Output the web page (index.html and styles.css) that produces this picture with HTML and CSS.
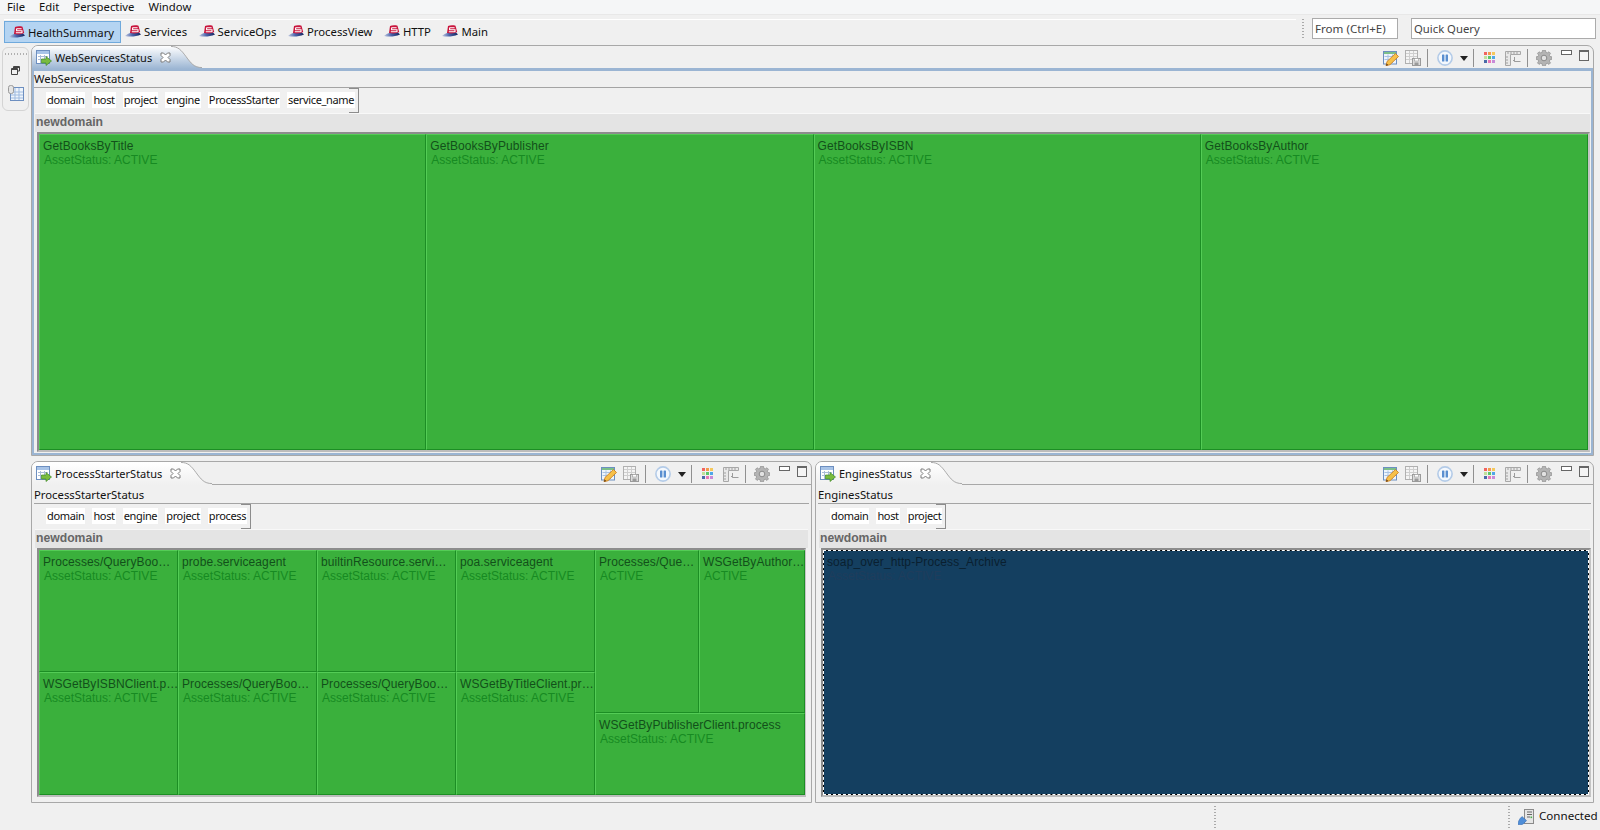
FILE: index.html
```html
<!DOCTYPE html>
<html lang="en">
<head>
<meta charset="utf-8">
<title>HealthSummary</title>
<link rel="stylesheet" href="styles.css">
</head>
<body>
<svg class="defs" width="0" height="0" aria-hidden="true">
  <defs>
    <linearGradient id="gActive" x1="0" y1="0" x2="0" y2="1"><stop offset="0" stop-color="#ffffff"/><stop offset="1" stop-color="#9bb5d3"/></linearGradient>
    <linearGradient id="gIdle" x1="0" y1="0" x2="0" y2="1"><stop offset="0" stop-color="#ffffff"/><stop offset="1" stop-color="#f0f0f0"/></linearGradient>
    <linearGradient id="gSwoosh" x1="0" y1="0" x2="1" y2="0"><stop offset="0" stop-color="#c4cce2"/><stop offset=".45" stop-color="#4a64ac"/><stop offset="1" stop-color="#14245e"/></linearGradient>
    <symbol id="i-hat" viewBox="0 0 16 12">
      <path d="M0 11C3 8 8 6.500 13 6.500L16 9.500C11 11.800 5 12 0 11Z" fill="url(#gSwoosh)"/>
      <path d="M6 1C8 .2 11.500 .2 13.500 .8L15.200 7C13 8.400 9 8.800 5 8Z" fill="#c8143c"/>
      <path d="M7.400 2.700H12.600M7.600 2.700V4.700H13V6.700H6.800" stroke="#fff" stroke-width="1.100" fill="none"/>
    </symbol>
    <symbol id="i-view" viewBox="0 0 16 16">
      <rect x=".5" y=".5" width="13" height="13" fill="#fff" stroke="#6d8fc0"/>
      <rect x="1" y="1" width="12" height="3" fill="#a8c4e8"/>
      <path d="M2 6.500H12M2 9.500H12M4.500 5V13M8.500 5V13" stroke="#a9bcd8"/>
      <path d="M5.500 9H10V6.500L15.500 11 10 15.500V13H5.500Z" fill="#79bb3f" stroke="#3f8a2a" stroke-width=".7"/>
    </symbol>
    <symbol id="i-edit" viewBox="0 0 16 16">
      <rect x=".5" y="1.500" width="13" height="12.500" fill="#eef4fb" stroke="#6d8fc0"/>
      <rect x="1" y="2" width="12" height="2" fill="#7cc08a"/>
      <path d="M1.500 6.500H13M1.500 9.500H13M5 4.500V14M9.500 4.500V14" stroke="#a9c2e2"/>
      <path d="M3 15.800L4 11.500 12.500 3.500 15.500 6.500 7 14.700Z" fill="#f6c04a" stroke="#c9781c" stroke-width=".8"/>
      <path d="M3 15.800L3.600 13.400 5.300 15.100Z" fill="#5a3a1a"/>
    </symbol>
    <symbol id="i-save" viewBox="0 0 16 16">
      <rect x=".5" y=".5" width="12" height="13" fill="#f4f4f4" stroke="#b0b0b0"/>
      <path d="M1 3.500H12M1 6.500H12M1 9.500H12M4.500 1V13M8.500 1V13" stroke="#cfcfcf"/>
      <rect x="7.500" y="8.500" width="8" height="7" fill="#dcdcdc" stroke="#9a9a9a"/>
      <rect x="9.500" y="8.500" width="4" height="2.500" fill="#fff" stroke="#9a9a9a" stroke-width=".6"/>
      <rect x="9.500" y="12.500" width="4" height="3" fill="#9a9a9a"/>
    </symbol>
    <symbol id="i-pause" viewBox="0 0 16 16">
      <circle cx="8" cy="8" r="7.100" fill="#f4f8fd" stroke="#b3cbe8" stroke-width="1.600"/>
      <rect x="5" y="4.500" width="2.400" height="7" rx=".6" fill="#5b8fd0"/>
      <rect x="8.600" y="4.500" width="2.400" height="7" rx=".6" fill="#5b8fd0"/>
    </symbol>
    <symbol id="i-colors" viewBox="0 0 12 12">
      <rect width="3" height="3" x="0" y="0" fill="#f2645e"/><rect width="3" height="3" x="4" y="0" fill="#f59a4c"/><rect width="3" height="3" x="8" y="0" fill="#f5c85c"/>
      <rect width="3" height="3" x="0" y="4" fill="#bfe09a"/><rect width="3" height="3" x="4" y="4" fill="#5cc76a"/><rect width="3" height="3" x="8" y="4" fill="#4fa6e8"/>
      <rect width="3" height="3" x="0" y="8" fill="#4a6aa8"/><rect width="3" height="3" x="4" y="8" fill="#e878b8"/><rect width="3" height="3" x="8" y="8" fill="#c88ad8"/>
    </symbol>
    <symbol id="i-ruler" viewBox="0 0 16 16">
      <path d="M.5 1.500H15.500V4.500H5.500V15.500H.5Z" fill="#e8e8e8" stroke="#a8a8a8"/>
      <path d="M3 2V4M6 2V4M9 2V4M12 2V4M1 7H3M1 10H3M1 13H3" stroke="#a0a0a0"/>
      <path d="M9.500 7V11.500H15.500M8 10L9.500 11.500" stroke="#9c9c9c" fill="none"/>
    </symbol>
    <symbol id="i-gear" viewBox="0 0 16 16">
      <path d="M6.500.3H9.500L9.900 2.300 11.200 2.900 13 1.800 14.500 3.400 13.300 5.100 13.800 6.400 15.800 6.800V9.400L13.800 9.800 13.300 11.100 14.500 12.900 13 14.400 11.200 13.200 9.900 13.800 9.500 15.800H6.500L6.100 13.800 4.800 13.200 3 14.400 1.500 12.900 2.700 11.100 2.200 9.800.2 9.400V6.800L2.200 6.400 2.700 5.100 1.500 3.400 3 1.800 4.800 2.900 6.100 2.300Z" fill="#b4b4b4" stroke="#8e8e8e" stroke-width=".7"/>
      <circle cx="8" cy="8" r="2.800" fill="#e2e2e2" stroke="#8a8a8a"/>
    </symbol>
    <symbol id="i-close" viewBox="0 0 11 11">
      <path d="M1 1H3.500L5.500 3 7.500 1H10V3.500L8 5.500 10 7.500V10H7.500L5.500 8 3.500 10H1V7.500L3 5.500 1 3.500Z" fill="#fff" stroke="#7a7a7a"/>
    </symbol>
    <symbol id="i-conn" viewBox="0 0 16 16">
      <rect x="6.500" y=".5" width="9" height="14" fill="#e6e6e6" stroke="#8a8a8a"/>
      <path d="M9 3H14M9 5.500H14M9 8H12" stroke="#666"/>
      <rect x="12.500" y="7.500" width="1.600" height="1.600" fill="#4ab04a"/>
      <path d="M0 15.500C0 12 1.500 10 4 7.500L8.500 11.500C7 13.500 5 15.500 3 15.800Z" fill="#4f8ed8" stroke="#2f62a8" stroke-width=".5"/>
    </symbol>
  </defs>
</svg>

<div class="menubar">
  <span class="menu">File</span><span class="menu">Edit</span><span class="menu">Perspective</span><span class="menu">Window</span>
</div>

<div class="toolbar">
  <div class="persp-list">
    <span class="persp active"><svg class="hat"><use href="#i-hat"/></svg><span>HealthSummary</span></span>
    <span class="persp"><svg class="hat"><use href="#i-hat"/></svg><span>Services</span></span>
    <span class="persp"><svg class="hat"><use href="#i-hat"/></svg><span>ServiceOps</span></span>
    <span class="persp"><svg class="hat"><use href="#i-hat"/></svg><span>ProcessView</span></span>
    <span class="persp"><svg class="hat"><use href="#i-hat"/></svg><span>HTTP</span></span>
    <span class="persp"><svg class="hat"><use href="#i-hat"/></svg><span>Main</span></span>
  </div>
  <div class="grip tool-grip"></div>
  <div class="field field-from">From (Ctrl+E)</div>
  <div class="field field-query">Quick Query</div>
</div>

<div class="main">
  <aside class="trim">
    <div class="trim-dots"></div>
    <svg class="trim-restore" viewBox="0 0 9 9"><path d="M2.500 2.500V.5H8.500V5H6.500M.5 2.500H6.500V8.500H.5Z" fill="none" stroke="#444"/><path d="M.5 3.500H6.500M2.500 1.500H8.500" stroke="#444"/></svg>
    <svg class="trim-view" viewBox="0 0 16 16"><rect x="2.500" y="2.500" width="13" height="13" fill="#eef4fb" stroke="#6d8fc0"/><path d="M3 7H15M3 10H15M3 13H15M7 3V15M11 3V15" stroke="#9fbbe0"/><rect x=".5" y=".5" width="5" height="8" rx="2" fill="#e4e4e4" stroke="#9a9a9a"/></svg>
  </aside>

  <div class="stage">
    <section class="panel panel-top active">
      <div class="tabbar">
        <div class="tab"><svg class="tab-ic"><use href="#i-view"/></svg><span class="tab-name">WebServicesStatus</span><svg class="tab-x"><use href="#i-close"/></svg></div>
        <svg class="tab-curve" viewBox="0 0 31 24" preserveAspectRatio="none"><path d="M0 0C7 0 10 4 15 11 20 18 23 22.500 31 22.500V24H0Z" fill="url(#gActive)"/><path d="M0 .5C7 .5 10 4 15 11 20 18 23 22.500 31 22.500" fill="none" stroke="#a8a8a8"/></svg>
        <div class="tabrest">
          <svg class="tb tb-edit"><use href="#i-edit"/></svg><svg class="tb tb-save"><use href="#i-save"/></svg><i class="tsep"></i><svg class="tb tb-pause"><use href="#i-pause"/></svg><i class="drop"></i><i class="tsep"></i><svg class="tb tb-colors"><use href="#i-colors"/></svg><svg class="tb tb-ruler"><use href="#i-ruler"/></svg><i class="tsep"></i><svg class="tb tb-gear"><use href="#i-gear"/></svg><i class="win-min"></i><i class="win-max"></i>
        </div>
      </div>
      <div class="body">
        <div class="title">WebServicesStatus</div>
        <div class="crumbs"><span class="chip">domain</span><span class="chip">host</span><span class="chip">project</span><span class="chip">engine</span><span class="chip">ProcessStarter</span><span class="chip">service_name</span></div>
        <div class="group">newdomain</div>
        <div class="treemap tm-four">
          <div class="cell"><b>GetBooksByTitle</b><em>AssetStatus: ACTIVE</em></div>
          <div class="cell"><b>GetBooksByPublisher</b><em>AssetStatus: ACTIVE</em></div>
          <div class="cell"><b>GetBooksByISBN</b><em>AssetStatus: ACTIVE</em></div>
          <div class="cell"><b>GetBooksByAuthor</b><em>AssetStatus: ACTIVE</em></div>
        </div>
      </div>
    </section>

    <div class="bottom">
      <section class="panel panel-left">
        <div class="tabbar">
          <div class="tab"><svg class="tab-ic"><use href="#i-view"/></svg><span class="tab-name">ProcessStarterStatus</span><svg class="tab-x"><use href="#i-close"/></svg></div>
          <svg class="tab-curve" viewBox="0 0 31 24" preserveAspectRatio="none"><path d="M0 0C7 0 10 4 15 11 20 18 23 22.500 31 22.500V24H0Z" fill="url(#gIdle)"/><path d="M0 .5C7 .5 10 4 15 11 20 18 23 22.500 31 22.500" fill="none" stroke="#a8a8a8"/></svg>
          <div class="tabrest">
            <svg class="tb tb-edit"><use href="#i-edit"/></svg><svg class="tb tb-save"><use href="#i-save"/></svg><i class="tsep"></i><svg class="tb tb-pause"><use href="#i-pause"/></svg><i class="drop"></i><i class="tsep"></i><svg class="tb tb-colors"><use href="#i-colors"/></svg><svg class="tb tb-ruler"><use href="#i-ruler"/></svg><i class="tsep"></i><svg class="tb tb-gear"><use href="#i-gear"/></svg><i class="win-min"></i><i class="win-max"></i>
          </div>
        </div>
        <div class="body">
          <div class="title">ProcessStarterStatus</div>
          <div class="crumbs"><span class="chip">domain</span><span class="chip">host</span><span class="chip">engine</span><span class="chip">project</span><span class="chip">process</span></div>
          <div class="group">newdomain</div>
          <div class="treemap tm-split">
            <div class="tm-grid">
              <div class="cell"><b>Processes/QueryBoo…</b><em>AssetStatus: ACTIVE</em></div>
              <div class="cell"><b>probe.serviceagent</b><em>AssetStatus: ACTIVE</em></div>
              <div class="cell"><b>builtinResource.servi…</b><em>AssetStatus: ACTIVE</em></div>
              <div class="cell"><b>poa.serviceagent</b><em>AssetStatus: ACTIVE</em></div>
              <div class="cell"><b>WSGetByISBNClient.p…</b><em>AssetStatus: ACTIVE</em></div>
              <div class="cell"><b>Processes/QueryBoo…</b><em>AssetStatus: ACTIVE</em></div>
              <div class="cell"><b>Processes/QueryBoo…</b><em>AssetStatus: ACTIVE</em></div>
              <div class="cell"><b>WSGetByTitleClient.pr…</b><em>AssetStatus: ACTIVE</em></div>
            </div>
            <div class="tm-side">
              <div class="tm-side-top">
                <div class="cell c-a"><b>Processes/Que…</b><em>ACTIVE</em></div>
                <div class="cell c-b"><b>WSGetByAuthor…</b><em>ACTIVE</em></div>
              </div>
              <div class="cell c-c"><b>WSGetByPublisherClient.process</b><em>AssetStatus: ACTIVE</em></div>
            </div>
          </div>
        </div>
      </section>

      <section class="panel panel-right">
        <div class="tabbar">
          <div class="tab"><svg class="tab-ic"><use href="#i-view"/></svg><span class="tab-name">EnginesStatus</span><svg class="tab-x"><use href="#i-close"/></svg></div>
          <svg class="tab-curve" viewBox="0 0 31 24" preserveAspectRatio="none"><path d="M0 0C7 0 10 4 15 11 20 18 23 22.500 31 22.500V24H0Z" fill="url(#gIdle)"/><path d="M0 .5C7 .5 10 4 15 11 20 18 23 22.500 31 22.500" fill="none" stroke="#a8a8a8"/></svg>
          <div class="tabrest">
            <svg class="tb tb-edit"><use href="#i-edit"/></svg><svg class="tb tb-save"><use href="#i-save"/></svg><i class="tsep"></i><svg class="tb tb-pause"><use href="#i-pause"/></svg><i class="drop"></i><i class="tsep"></i><svg class="tb tb-colors"><use href="#i-colors"/></svg><svg class="tb tb-ruler"><use href="#i-ruler"/></svg><i class="tsep"></i><svg class="tb tb-gear"><use href="#i-gear"/></svg><i class="win-min"></i><i class="win-max"></i>
          </div>
        </div>
        <div class="body">
          <div class="title">EnginesStatus</div>
          <div class="crumbs"><span class="chip">domain</span><span class="chip">host</span><span class="chip">project</span></div>
          <div class="group">newdomain</div>
          <div class="treemap tm-one">
            <div class="cell selected"><b>soap_over_http-Process_Archive</b><em>AssetStatus: ACTIVE</em></div>
          </div>
        </div>
      </section>
    </div>
  </div>
</div>

<div class="statusbar">
  <div class="grip status-grip-a"></div>
  <div class="grip status-grip-b"></div>
  <svg class="conn"><use href="#i-conn"/></svg>
  <span class="conn-text">Connected</span>
</div>
</body>
</html>
```

FILE: styles.css
```css
* { box-sizing: border-box; }
html, body { margin: 0; padding: 0; }
body {
  width: 1600px;
  height: 830px;
  overflow: hidden;
  background: #f0f0f0;
  font-family: "Noto Sans", "Open Sans", sans-serif;
  font-size: 11.3px;
  color: #111;
  display: flex;
  flex-direction: column;
}
.defs { position: absolute; }

/* menu */
.menubar {
  height: 15px;
  flex: none;
  display: flex;
  background: #f5f6f7;
  border-bottom: 1px solid #e8e8e8;
  padding-left: 7px;
  line-height: 13px;
}
.menu { margin-right: 14px; }

/* toolbar */
.toolbar {
  height: 30px;
  flex: none;
  display: flex;
  align-items: flex-start;
  padding-left: 4px;
}
.persp-list { width: 1292px; display: flex; margin-top: 4px; padding-top: 1px; border-top: 1px solid #fff; }
.persp { display: flex; align-items: center; height: 22px; padding: 0 11.500px 2px 0; }
.persp.active { background: #b4d4f2; border: 1px solid #6fa9dc; padding: 0 6px 0 4px; margin-right: 4px; width: 117px; }
.hat { width: 16px; height: 12px; margin-right: 3px; flex: none; }
.grip { width: 2px; background: repeating-linear-gradient(to bottom, #aaa 0 1px, #f0f0f0 1px 3px); }
.tool-grip { height: 20px; margin: 4px 8px 0 6px; }
.field {
  background: #fff;
  border: 1px solid #ababab;
  height: 21px;
  line-height: 19px;
  padding-left: 2px;
  margin-top: 3px;
  color: #444;
}
.field-from { width: 86px; margin-right: 13px; font-size: 11.600px; }
.field-query { width: 185px; }

/* main */
.main { flex: none; display: flex; height: 758px; }
.trim {
  width: 27px;
  height: 64px;
  margin: 2px 2px 0 2px;
  border: 1px solid #d4d4d4;
  border-radius: 6px;
  display: flex;
  flex-direction: column;
  align-items: center;
}
.trim-dots { width: 22px; height: 2px; margin-top: 5px; background: repeating-linear-gradient(to right, #b0b0b0 0 1px, #f0f0f0 1px 3px); }
.trim-restore { width: 9px; height: 9px; margin-top: 11px; }
.trim-view { width: 16px; height: 16px; margin-top: 10px; }
.stage { width: 1563px; display: flex; flex-direction: column; gap: 5px; }
.bottom { display: flex; gap: 3px; height: 342px; }

/* panels */
.panel {
  display: flex;
  flex-direction: column;
  border: 1px solid #a8a8a8;
  border-radius: 7px 7px 0 0;
  overflow: hidden;
  background: #f0f0f0;
}
.panel-top { height: 411px; }
.panel-left { width: 781px; }
.panel-right { width: 779px; }
.tabbar { height: 23px; flex: none; display: flex; }
.tab {
  display: flex;
  align-items: center;
  padding-left: 4px;
  background: linear-gradient(#fff, #f0f0f0);
}
.active .tab { background: linear-gradient(#fff, #9bb5d3); }
.tab-ic { width: 16px; height: 16px; margin-right: 3px; flex: none; }
.tab-name { white-space: nowrap; font-size: 11px; }
.tab-x { width: 11px; height: 11px; margin: 0 0 0 8px; flex: none; }
.tab-curve { width: 31px; height: 23px; flex: none; }
.tabrest {
  flex: 1;
  display: flex;
  align-items: flex-start;
  justify-content: flex-end;
  padding: 4px 4px 0 0;
  border-bottom: 1px solid #a8a8a8;
  height: 23px;
}
.tb { flex: none; display: block; height: 16px; width: 16px; }
.tb-save { margin-left: 6px; }
.tsep { width: 1px; height: 18px; background: #909090; margin: -1px 9px 0 6px; flex: none; }
.drop + .tsep { margin-left: 5px; }
.tb-ruler + .tsep { margin-right: 8px; }
.tb-colors { width: 12px; height: 12px; margin: 2px 0 0 1px; }
.tb-ruler { margin-left: 9px; }
.drop { flex: none; width: 8px; height: 5px; margin: 6px 0 0 7px; border: 4px solid transparent; border-top: 5px solid #222; border-bottom: 0; }
.tb-gear { margin-right: 9px; }
.win-min { width: 11px; height: 5px; border: 1px solid #666; background: #fff; margin: 0 7px 0 0; flex: none; }
.win-max { width: 10px; height: 11px; border: 1px solid #666; border-top-width: 2px; background: #f4f4f4; flex: none; }

.body { flex: 1; display: flex; flex-direction: column; min-height: 0; border: solid #f0f0f0; border-width: 1px 2px 2px; }
.panel-top .body { border: solid #9bb5d3; border-width: 2px 2px 2px; }
.panel-top .tabrest { border-bottom-color: #9bb5d3; }
.title { height: 18px; line-height: 17px; padding-left: 0; border-bottom: 1px solid #a4a4a4; flex: none; }
.panel-top .title { height: 17px; line-height: 15px; }
.crumbs { height: 25px; flex: none; display: flex; align-items: flex-start; padding: 4px 0 0 12px; }
.chip { background: #fff; height: 16px; line-height: 15px; padding: 0 1px; margin-right: 7px; font-size: 11px; letter-spacing: -.350px; }
.chip:last-child { margin-right: 0; position: relative; }
.crumbs .chip:last-child::after {
  content: "";
  position: absolute;
  right: -4px;
  top: -4px;
  width: 9px;
  height: 23px;
  border: 1px solid #8c8c8c;
  border-left: 0;
}
.group {
  height: 19px;
  flex: none;
  background: #e4e4e4;
  border-top: 1px solid #f8f8f8;
  font: bold 12.200px/17px "Liberation Sans", Arial, sans-serif;
  color: #666;
  padding-left: 1px;
  margin: 0 1px;
}

/* treemap */
.treemap {
  flex: 1;
  min-height: 0;
  margin: 0 3px 3px;
  border: 2px solid #8c8c8c;
  border-bottom-color: #bcbcbc;
  border-right-color: #c4c4c4;
  background: #3ab03c;
}
.panel-top .treemap { margin: 0 1px 1px 3px; }
.panel-right .treemap { margin-right: 0; }
.tm-four { display: grid; grid-template-columns: repeat(4, 1fr); }
.tm-split { display: flex; }
.tm-grid { width: 556px; flex: none; display: grid; grid-template-columns: repeat(4, 1fr); grid-template-rows: 122px 1fr; }
.tm-side { flex: 1; display: flex; flex-direction: column; }
.tm-side-top { height: 163px; display: flex; flex: none; }
.c-a { width: 104px; flex: none; }
.c-b { flex: 1; }
.c-c { flex: 1; }
.tm-one { display: flex; background: #000; }
.cell {
  background: #3ab03c;
  border: 1px solid;
  border-color: #54cc56 #1c8e24 #1c8e24 #54cc56;
  padding: 4px 0 0 3px;
  font: 12px/14px "Liberation Sans", Arial, sans-serif;
  letter-spacing: .1px;
  overflow: hidden;
  white-space: nowrap;
  min-width: 0;
}
.cell b { display: block; font-weight: 400; color: #12501a; }
.cell em { display: block; font-style: normal; color: #178a22; padding-left: 1px; letter-spacing: 0; }
.selected {
  flex: 1;
  background: #143f60;
  background-clip: padding-box;
  border: 1px dashed #fff;
}
.selected b { color: #0a1f30; }
.selected em { color: #1f3d5c; }

/* status */
.statusbar { height: 27px; flex: none; display: flex; align-items: flex-start; padding-left: 1214px; }
.statusbar .grip { height: 22px; margin-top: 3px; }
.status-grip-b { margin-left: 292px; }
.conn { width: 16px; height: 16px; margin: 6px 0 0 8px; flex: none; }
.conn-text { margin: 5px 0 0 5px; font-size: 11.600px; }
```
